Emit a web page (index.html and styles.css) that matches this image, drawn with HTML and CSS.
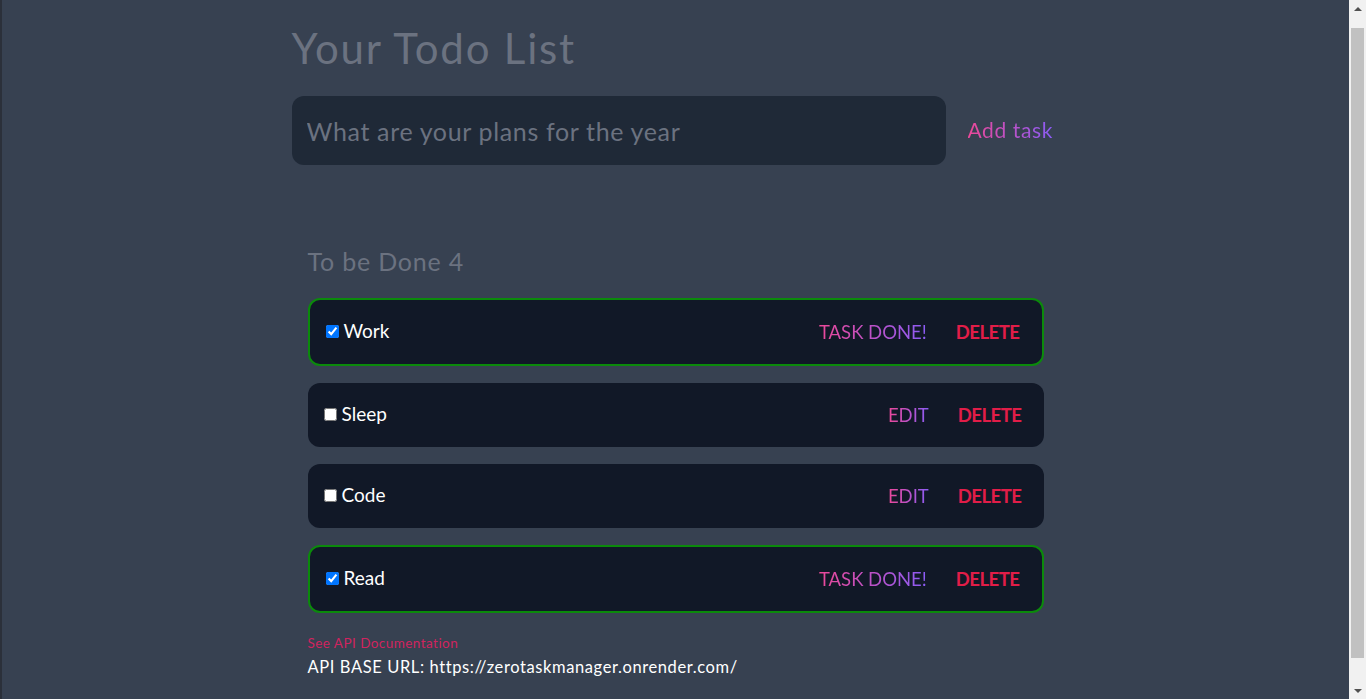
FILE: index.html
```html
<!DOCTYPE html>
<html lang="en">
<head>
<meta charset="utf-8">
<title>Todo</title>
<link rel="stylesheet" href="styles.css">
</head>
<body>
<div class="page">
  <div class="viewport">
    <main class="container">
      <h1 class="title">Your Todo List</h1>
      <form class="add-row">
        <input class="task-input" type="text" placeholder="What are your plans for the year">
        <button class="add-btn" type="button"><span class="grad">Add task</span></button>
      </form>
      <section class="list">
        <h2 class="list-title">To be Done 4</h2>
        <div class="cards">
          <div class="card done">
            <label class="task"><input type="checkbox" checked><span>Work</span></label>
            <div class="actions"><button class="btn"><span class="grad">TASK DONE!</span></button><button class="btn del">DELETE</button></div>
          </div>
          <div class="card">
            <label class="task"><input type="checkbox"><span>Sleep</span></label>
            <div class="actions"><button class="btn"><span class="grad">EDIT</span></button><button class="btn del">DELETE</button></div>
          </div>
          <div class="card">
            <label class="task"><input type="checkbox"><span>Code</span></label>
            <div class="actions"><button class="btn"><span class="grad">EDIT</span></button><button class="btn del">DELETE</button></div>
          </div>
          <div class="card done">
            <label class="task"><input type="checkbox" checked><span>Read</span></label>
            <div class="actions"><button class="btn"><span class="grad">TASK DONE!</span></button><button class="btn del">DELETE</button></div>
          </div>
        </div>
        <footer class="foot">
          <a class="doc-link" href="#">See API Documentation</a>
          <p class="base-url">API BASE URL: https://zerotaskmanager.onrender.com/</p>
        </footer>
      </section>
    </main>
  </div>
  <div class="scrollbar" aria-hidden="true">
    <div class="sb-arrow"><span class="tri-up"></span></div>
    <div class="sb-track"><div class="sb-thumb"></div></div>
    <div class="sb-arrow"><span class="tri-down"></span></div>
  </div>
</div>
</body>
</html>
```
FILE: styles.css
```css
* { box-sizing: border-box; }
html, body { margin: 0; padding: 0; }
body {
  background: #374151;
  font-family: "Lato", "Open Sans", sans-serif;
  color: #fff;
  overflow: hidden;
}
.page {
  display: flex;
  height: 100vh;
  border-left: 2px solid #2b303a;
}
.viewport {
  flex: 1;
  min-width: 0;
  overflow: hidden;
}
.container {
  width: 768px;
  margin: 0 auto;
  padding-top: 22px;
}
.title {
  margin: 0;
  font-size: 42px;
  font-weight: 400;
  letter-spacing: 1.8px;
  color: #6b7280;
  line-height: 52px;
}
.add-row {
  display: flex;
  align-items: center;
  margin-top: 22px;
}
.task-input {
  width: 654px;
  height: 69px;
  border: none;
  border-radius: 12px;
  background: #1f2937;
  padding: 0 15px;
  font-family: inherit;
  font-size: 25px;
  letter-spacing: 0.65px;
  color: #fff;
  outline: none;
}
.task-input::placeholder { color: #6b7280; }
.add-btn {
  background: none;
  border: none;
  margin: -2px 0 0 22px;
  padding: 0;
  font-family: inherit;
  font-size: 21px;
  letter-spacing: 0.6px;
  cursor: pointer;
}
.grad {
  background: linear-gradient(to right, #ec4899, #8b5cf6);
  -webkit-background-clip: text;
  background-clip: text;
  color: transparent;
}
.list {
  padding: 0 16px;
  margin-top: 80px;
}
.list-title {
  margin: 0 0 21px;
  font-size: 25px;
  font-weight: 400;
  letter-spacing: 0.8px;
  color: #6b7280;
  line-height: 32px;
}
.cards {
  display: flex;
  flex-direction: column;
  gap: 17px;
}
.card {
  display: flex;
  align-items: center;
  justify-content: space-between;
  height: 64px;
  padding: 0 22px 0 16px;
  background: #111827;
  border-radius: 12px;
}
.card.done {
  height: 68px;
  border: 2px solid #0b8a0b;
}
.task {
  display: flex;
  align-items: center;
  gap: 5px;
  font-size: 19px;
  margin-top: -4px;
}
.task input {
  margin: 2px 0 0;
  width: 13px;
  height: 13px;
}
.actions {
  display: flex;
  align-items: center;
  gap: 29px;
}
.btn {
  background: none;
  border: none;
  padding: 0;
  font-family: inherit;
  font-size: 18.5px;
  cursor: pointer;
}
.del {
  color: #e11d48;
  font-weight: 700;
  letter-spacing: -0.5px;
}
.foot {
  margin-top: 22px;
}
.doc-link {
  display: block;
  font-size: 13.5px;
  color: #d0245f;
  text-decoration: none;
  letter-spacing: 0.45px;
}
.base-url {
  margin: 6px 0 0;
  font-size: 16.5px;
  letter-spacing: 0.6px;
}
.scrollbar {
  width: 17px;
  flex: none;
  background: #f1f1f1;
  display: flex;
  flex-direction: column;
}
.sb-arrow {
  height: 17px;
  display: flex;
  align-items: center;
  justify-content: center;
}
.tri-up, .tri-down {
  width: 0;
  height: 0;
  border-left: 4px solid transparent;
  border-right: 4px solid transparent;
}
.tri-up { border-bottom: 4px solid #505050; }
.tri-down { border-top: 4px solid #505050; }
.sb-track {
  flex: 1;
  padding: 11px 2px 0;
}
.sb-thumb {
  height: 630px;
  background: #c1c1c1;
}
```
